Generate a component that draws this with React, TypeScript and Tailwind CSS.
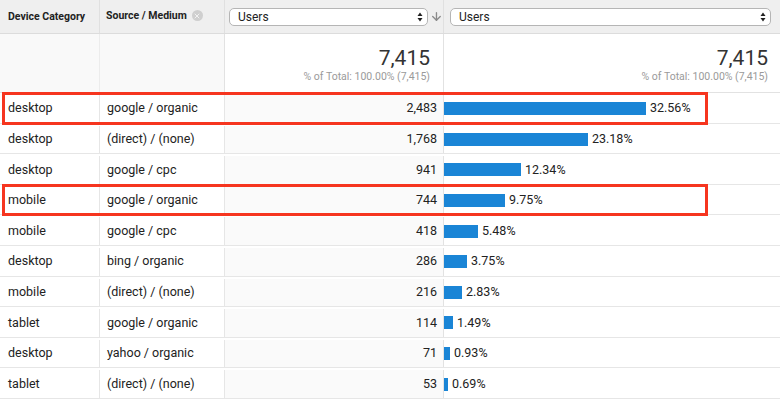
import { ArrowDown, X } from "lucide-react";

const ROWS = [
  { device: "desktop", source: "google / organic", users: 2483, pct: 32.56, marked: true },
  { device: "desktop", source: "(direct) / (none)", users: 1768, pct: 23.18 },
  { device: "desktop", source: "google / cpc", users: 941, pct: 12.34 },
  { device: "mobile", source: "google / organic", users: 744, pct: 9.75, marked: true },
  { device: "mobile", source: "google / cpc", users: 418, pct: 5.48 },
  { device: "desktop", source: "bing / organic", users: 286, pct: 3.75 },
  { device: "mobile", source: "(direct) / (none)", users: 216, pct: 2.83 },
  { device: "tablet", source: "google / organic", users: 114, pct: 1.49 },
  { device: "desktop", source: "yahoo / organic", users: 71, pct: 0.93 },
  { device: "tablet", source: "(direct) / (none)", users: 53, pct: 0.69 },
];

const MAX_BAR = 202;

function MetricSelect({ className }: { className: string }) {
  return (
    <div
      className={`flex h-[18px] items-center justify-between rounded-[5px] border border-[#b5b5b5] bg-white pl-2 pr-1 text-[12px] text-[#222] ${className}`}
    >
      <span>Users</span>
      <svg width="6" height="10" viewBox="0 0 6 10">
        <path d="M3 0.5 L5.5 4 H0.5 Z" fill="#222" />
        <path d="M3 9.5 L5.5 6 H0.5 Z" fill="#222" />
      </svg>
    </div>
  );
}

function Totals({ pr }: { pr: string }) {
  return (
    <div className={`flex flex-col items-end pt-[13px] ${pr}`}>
      <span className="text-[21px] leading-[23px] text-[#333]">7,415</span>
      <span className="text-[10.5px] leading-[13px] text-[#9a9a9a]">% of Total: 100.00% (7,415)</span>
    </div>
  );
}

export default function App() {
  return (
    <div className="h-[399px] w-[780px] overflow-hidden bg-white font-['Roboto',sans-serif] text-[#222]">
      {/* header */}
      <div className="flex h-[34px] border-b border-[#dcdcdc] bg-[#efefef]">
        <div className="flex w-[100px] items-center border-r border-[#e0e0e0] pl-[8px] text-[10.5px] font-bold">
          Device Category
        </div>
        <div className="flex w-[125px] items-start gap-[5px] border-r border-[#e0e0e0] pl-[6px] pt-[8px] text-[10.5px] font-bold">
          <span>Source / Medium</span>
          <span className="mt-[2px] flex h-[11px] w-[11px] items-center justify-center rounded-full bg-[#cfcfcf]">
            <X size={8} strokeWidth={3} color="#f2f2f2" />
          </span>
        </div>
        <div className="flex w-[219px] items-center border-r border-[#e0e0e0] pl-[4px]">
          <MetricSelect className="w-[200px]" />
          <ArrowDown size={13} strokeWidth={2.5} color="#8a8a8a" className="ml-[2px]" />
        </div>
        <div className="flex flex-1 items-center pl-[6px] pr-[9px]">
          <MetricSelect className="w-full" />
        </div>
      </div>

      {/* totals */}
      <div className="flex h-[59px] border-b border-[#e2e2e2] bg-[#f9f9f9]">
        <div className="w-[100px] border-r border-[#ececec]" />
        <div className="w-[125px] border-r border-[#e2e2e2]" />
        <div className="w-[219px] border-r border-[#e2e2e2] bg-white">
          <Totals pr="pr-[13px]" />
        </div>
        <div className="flex-1 bg-white">
          <Totals pr="pr-[12px]" />
        </div>
      </div>

      {/* rows */}
      {ROWS.map((r) => (
        <div key={r.device + r.source} className="relative flex h-[30.6px] border-b border-[#e6e6e6] pt-[2px] text-[12.5px]">
          <div className="flex w-[100px] items-center border-r border-[#e6e6e6] pl-[8px]">{r.device}</div>
          <div className="flex w-[125px] items-center border-r border-[#e6e6e6] pl-[7px]">{r.source}</div>
          <div className="flex w-[219px] items-center justify-end border-r border-[#e2e2e2] bg-[#fafafa] pr-[6px]">
            {r.users.toLocaleString("en-US")}
          </div>
          <div className="flex flex-1 items-center gap-[4px]">
            <div
              className="h-[13px] bg-[#1a85d6]"
              style={{ width: Math.max(3, Math.round((r.users / ROWS[0].users) * MAX_BAR)) }}
            />
            <span>{r.pct.toFixed(2)}%</span>
          </div>
          {r.marked && (
            <div className="pointer-events-none absolute -bottom-[2px] left-[2px] -top-[1px] w-[706px] border-[3px] border-[#f6351f]" />
          )}
        </div>
      ))}
    </div>
  );
}
